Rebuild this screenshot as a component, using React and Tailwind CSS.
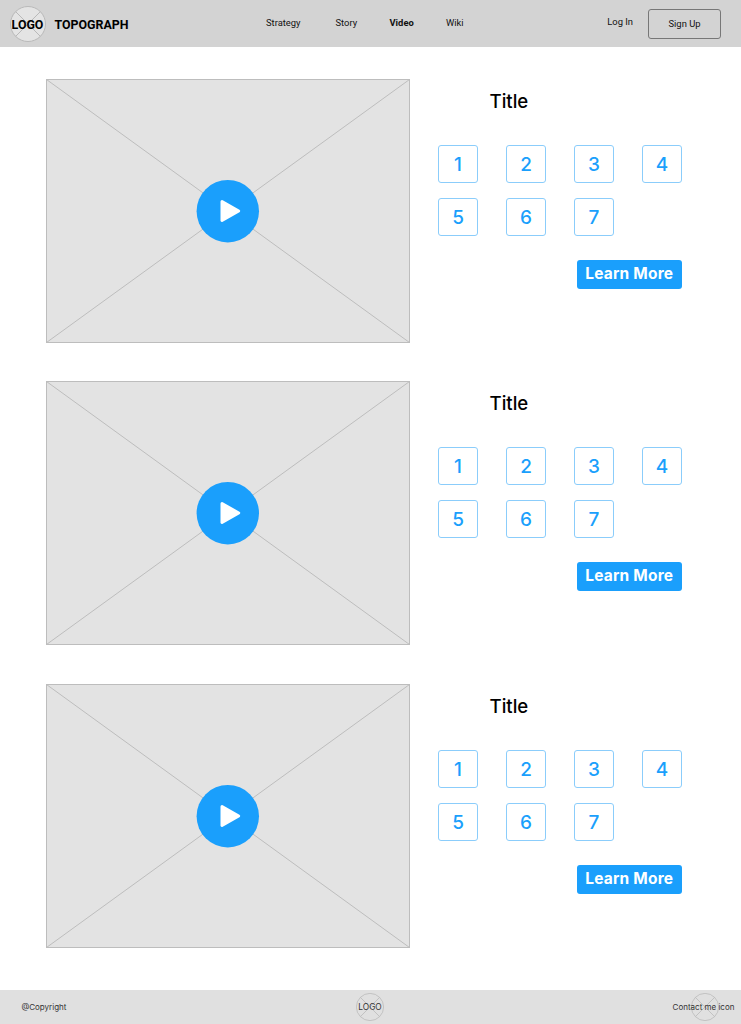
const navItems = [
  { label: "Strategy", className: "ml-[137.5px] w-[35px]" },
  { label: "Story", className: "ml-[34.5px] w-[22px]" },
  { label: "Video", className: "ml-[32px] w-[24px] font-bold" },
  { label: "Wiki", className: "ml-[32.5px] w-[18px]" },
];

function CrossedCircle({ className }) {
  return (
    <svg className={className} viewBox="0 0 36 36" stroke="#b9b9b9" strokeWidth="1">
      <circle cx="18" cy="18" r="17.5" />
      <path d="M5.6 5.6 30.4 30.4M30.4 5.6 5.6 30.4" />
    </svg>
  );
}

function Header() {
  return (
    <header className="flex h-[47px] shrink-0 items-start bg-[#d3d3d3] font-[Roboto,sans-serif] text-[9.4px] leading-[12px] whitespace-nowrap text-[#111]">
      <div className="relative mt-[5.5px] ml-[9.5px] size-[36px] shrink-0">
        <CrossedCircle className="size-full fill-[#e4e4e4]" />
        <span className="absolute inset-0 flex items-center justify-center pt-[2px] text-[12.4px] font-bold text-black">
          LOGO
        </span>
      </div>
      <div className="mt-[17px] ml-[9px] w-[74px] shrink-0 text-[12.4px] leading-[15px] font-bold text-black">
        TOPOGRAPH
      </div>
      <nav className="mt-[17px] flex">
        {navItems.map((item) => (
          <a key={item.label} className={item.className}>
            {item.label}
          </a>
        ))}
      </nav>
      <a className="mt-[16px] ml-auto">Log In</a>
      <button className="mt-[9px] mr-[20px] ml-[15px] h-[30px] w-[73px] rounded-[3px] border border-[#777]">
        Sign Up
      </button>
    </header>
  );
}

function VideoPlaceholder() {
  return (
    <div className="h-[264px] w-[364px] shrink-0">
      <svg className="size-full" viewBox="0 0 364 264">
        <rect x="0.5" y="0.5" width="363" height="263" fill="#e3e3e3" stroke="#bdbdbd" />
        <path d="M0.5 0.5 363.5 263.5M363.5 0.5 0.5 263.5" fill="none" stroke="#bdbdbd" />
        <circle cx="181.8" cy="132.2" r="31.2" fill="#1a9ffc" />
        <path
          d="M176 122.5 192.7 132 176 141.5Z"
          fill="white"
          stroke="white"
          strokeWidth="3"
          strokeLinejoin="round"
        />
      </svg>
    </div>
  );
}

function VideoSection({ className }) {
  return (
    <section className={`flex h-[264px] shrink-0 pl-[46px] ${className}`}>
      <VideoPlaceholder />
      <div className="ml-[28px] flex w-[244px] flex-col">
        <h2 className="mt-[10px] ml-[51.5px] text-[18.6px] leading-[24px] font-medium whitespace-nowrap text-black">
          Title
        </h2>
        <div className="mt-[32px] grid grid-cols-4 gap-x-[28px] gap-y-[15px]">
          {[1, 2, 3, 4, 5, 6, 7].map((number) => (
            <button
              key={number}
              className="h-[38px] w-[40px] rounded-[3px] border border-[#8bcdfb] pt-px text-[19px] leading-[24px] font-medium text-[#1a9ffc]"
            >
              {number}
            </button>
          ))}
        </div>
        <button className="mt-[23.5px] ml-auto h-[29px] w-[105.5px] rounded-[3px] bg-[#1a9ffc] text-[15.5px] leading-[20px] font-bold tracking-[0.2px] whitespace-nowrap text-white">
          Learn More
        </button>
      </div>
    </section>
  );
}

function Footer() {
  return (
    <footer className="mt-auto grid h-[34.5px] shrink-0 grid-cols-[1fr_28px_1fr] items-center bg-[#e0e0e0] text-[8px] leading-[10px] whitespace-nowrap text-[#333]">
      <span className="pl-[21.5px]">@Copyright</span>
      <div className="relative right-[0.5px] size-[28px]">
        <CrossedCircle className="size-full fill-none" />
        <span className="absolute inset-0 flex items-center justify-center text-[8.3px]">LOGO</span>
      </div>
      <div className="relative mr-[6px] flex h-[28px] w-[63px] items-center justify-center justify-self-end">
        <CrossedCircle className="absolute left-[18.5px] size-[28px] fill-none" />
        <span className="relative">Contact me icon</span>
      </div>
    </footer>
  );
}

export default function App() {
  return (
    <div className="flex h-[1024px] w-[741px] flex-col overflow-hidden bg-white font-[Inter,sans-serif]">
      <Header />
      <main>
        <VideoSection className="mt-[32px]" />
        <VideoSection className="mt-[38px]" />
        <VideoSection className="mt-[39px]" />
      </main>
      <Footer />
    </div>
  );
}
